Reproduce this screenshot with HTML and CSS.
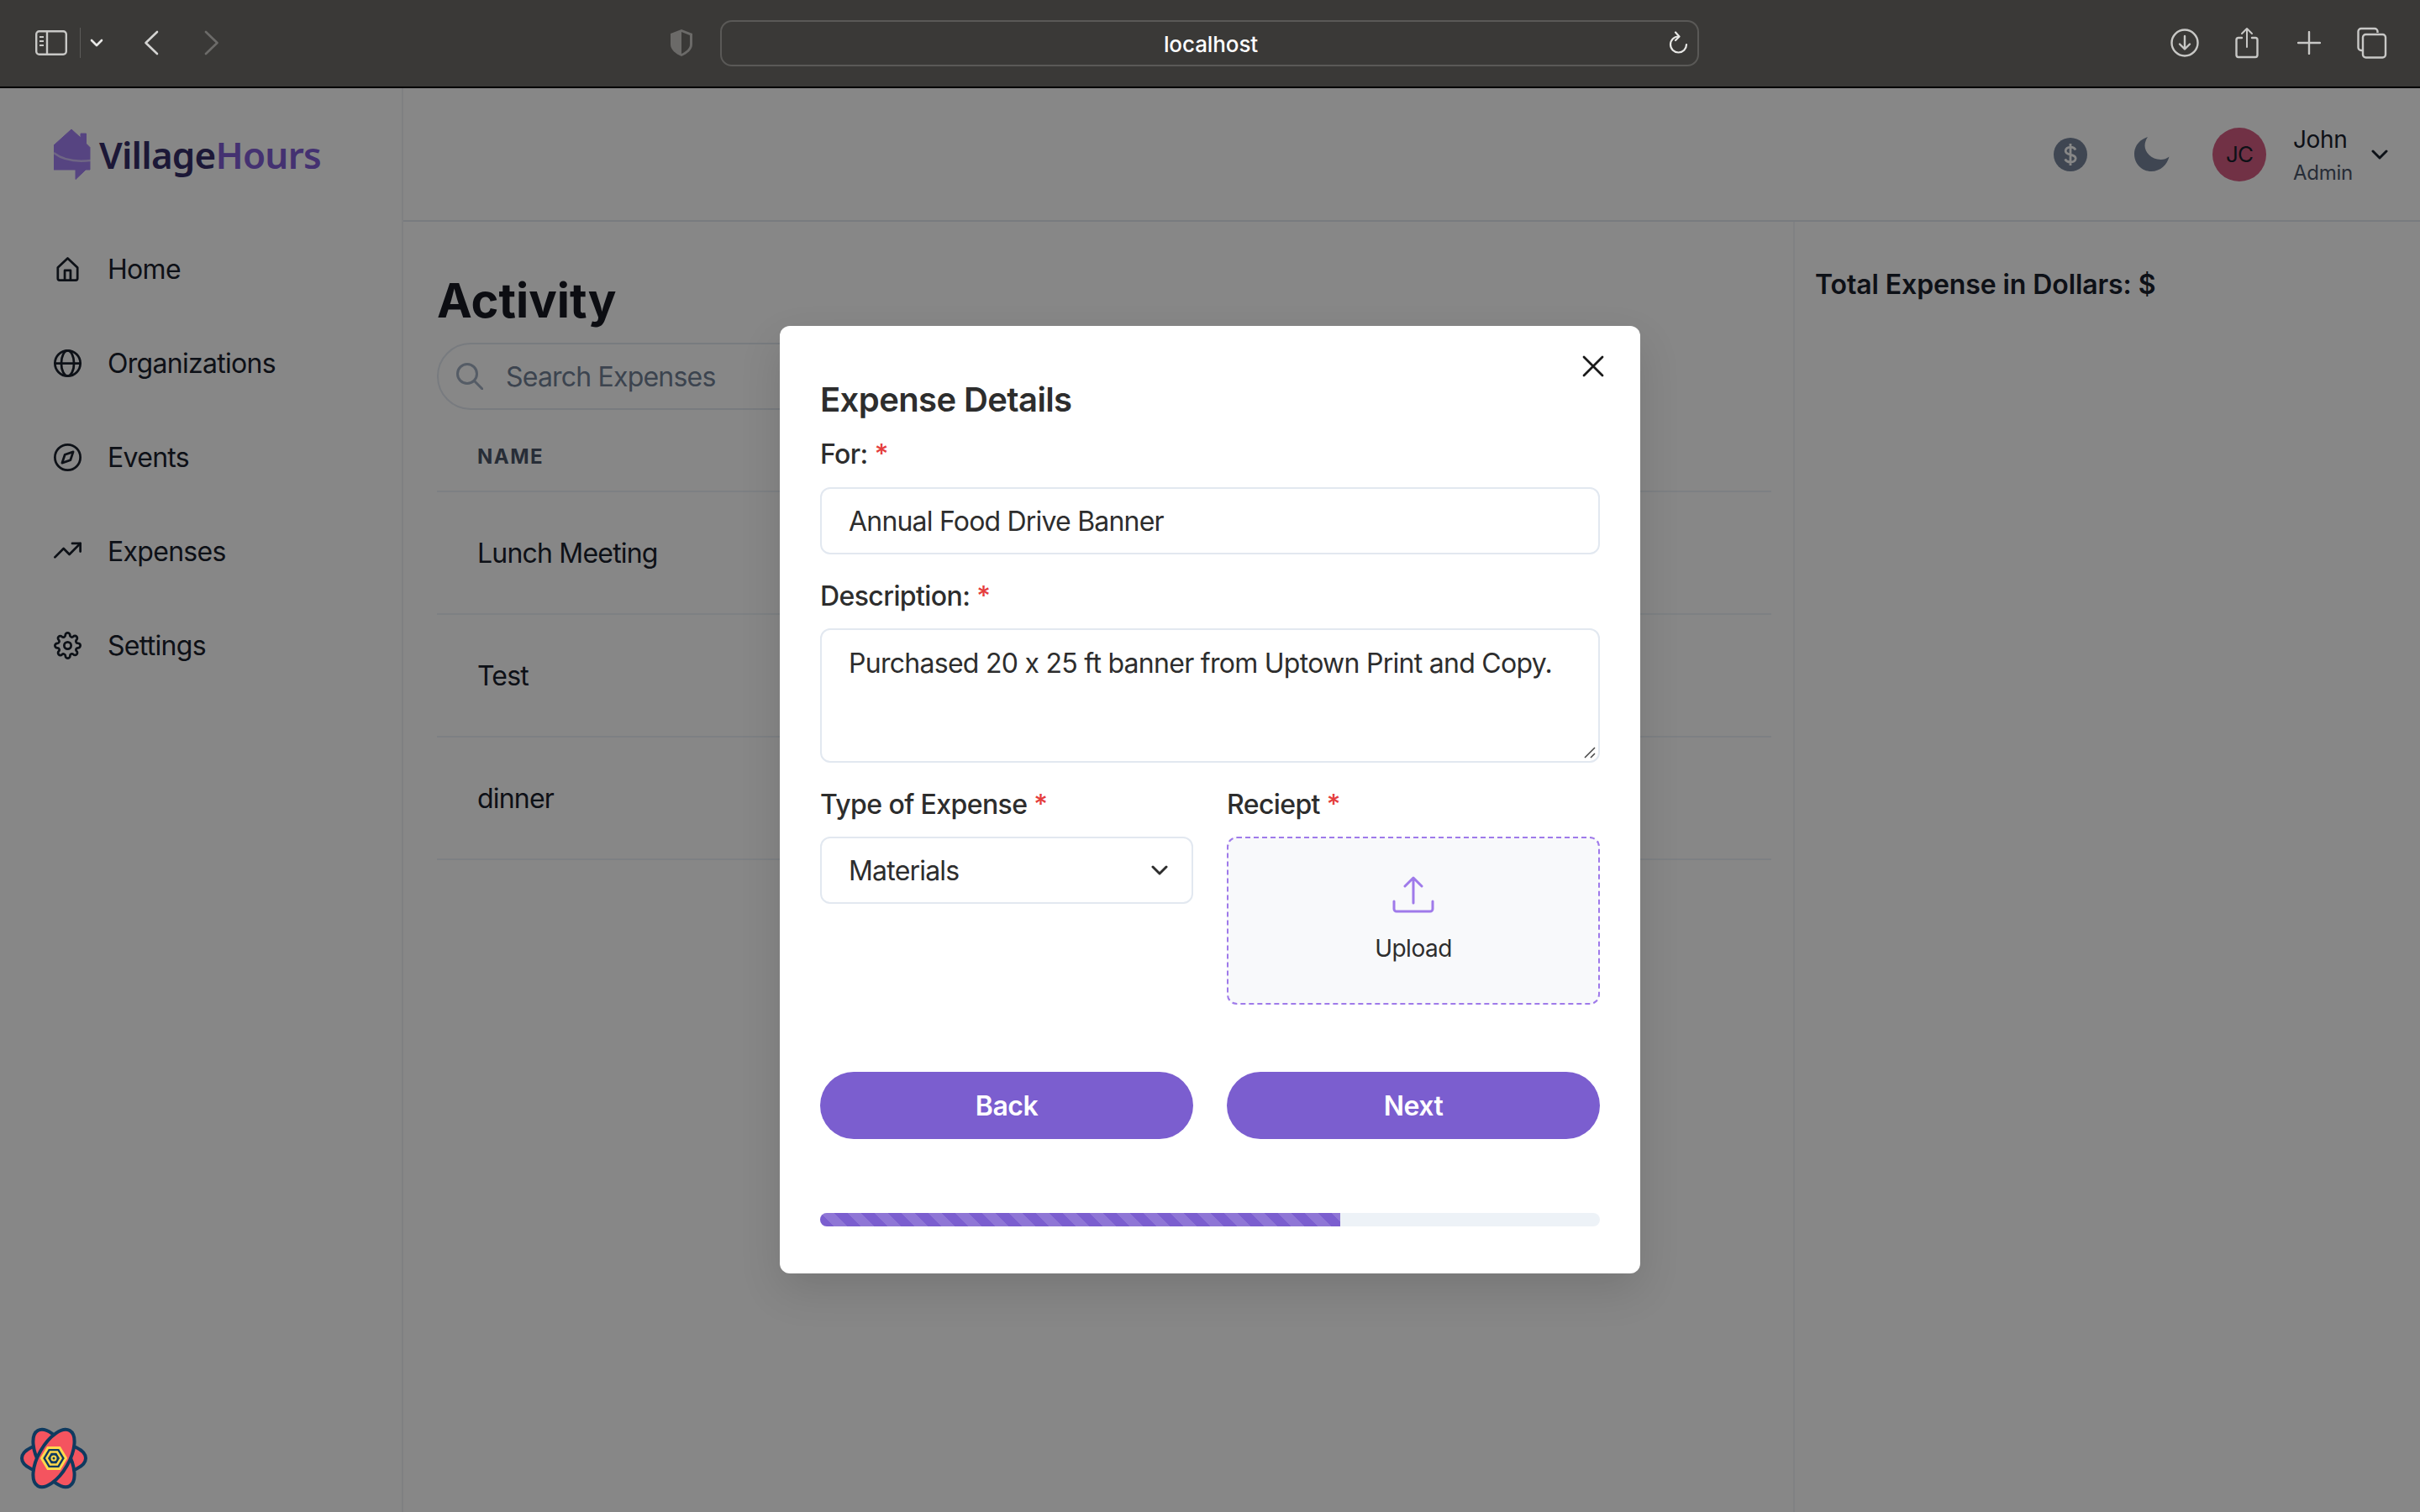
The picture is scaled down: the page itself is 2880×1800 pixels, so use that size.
FILE: index.html
```html
<!DOCTYPE html>
<html lang="en">
<head>
<meta charset="utf-8">
<title>VillageHours</title>
<link rel="stylesheet" href="styles.css">
</head>
<body>
<header class="chrome">
  <div class="chrome-left">
    <svg class="ci-side" width="38" height="30" viewBox="0 0 38 30" fill="none" stroke="#c8c8c6" stroke-width="2.4"><rect x="1.2" y="1.2" width="35.6" height="27.6" rx="3.5"/><path d="M14 1v28"/><path d="M5 8h5M5 13h5M5 18h5" stroke-width="2"/></svg>
    <span class="ci-sep"></span>
    <svg class="ci-drop" width="16" height="10" viewBox="0 0 16 10" fill="none" stroke="#e8e8e6" stroke-width="2.6" stroke-linecap="round" stroke-linejoin="round"><path d="M2 2l6 6 6-6"/></svg>
    <svg class="ci-back" width="18" height="30" viewBox="0 0 18 30" fill="none" stroke="#d4d4d2" stroke-width="2.6" stroke-linecap="round" stroke-linejoin="round"><path d="M16 2L2.5 15 16 28"/></svg>
    <svg class="ci-fwd" width="18" height="30" viewBox="0 0 18 30" fill="none" stroke="#6c6b69" stroke-width="2.6" stroke-linecap="round" stroke-linejoin="round"><path d="M2 2l13.500 13L2 28"/></svg>
  </div>
  <div class="chrome-mid">
    <svg class="ci-shield" width="28" height="34" viewBox="0 0 28 34"><path d="M14 1L27 6v13c0 6-6 11-13 14C7 30 1 25 1 19V6z" fill="#6b6a68"/><path d="M14 4l10 4v11c0 4.500-4.500 8.500-10 11z" fill="#3a3937"/></svg>
    <div class="url">
      <span class="url-text">localhost</span>
      <svg class="ci-reload" width="24" height="28" viewBox="0 0 24 28" fill="none" stroke="#e8e8e6" stroke-width="2.2" stroke-linecap="round" stroke-linejoin="round"><path d="M21 16a9.500 9.500 0 1 1-9.500-9.500"/><path d="M8 1.500l4.500 5-4.500 4.500"/></svg>
    </div>
  </div>
  <div class="chrome-right">
    <svg width="34" height="34" viewBox="0 0 34 34" fill="none" stroke="#c8c8c6" stroke-width="2.4" stroke-linecap="round" stroke-linejoin="round"><circle cx="17" cy="17" r="15.500"/><path d="M17 9v15M11 18.500l6 6 6-6"/></svg>
    <svg width="28" height="38" viewBox="0 0 28 38" fill="none" stroke="#c8c8c6" stroke-width="2.400" stroke-linecap="round" stroke-linejoin="round"><path d="M8 13H4a2.500 2.500 0 0 0-2.500 2.500v18A2.500 2.500 0 0 0 4 36h20a2.500 2.500 0 0 0 2.500-2.500v-18A2.500 2.500 0 0 0 24 13h-4"/><path d="M14 24V2M8 8l6-6 6 6" stroke-width="2"/></svg>
    <svg class="ci-plus" width="28" height="28" viewBox="0 0 28 28" fill="none" stroke="#c8c8c6" stroke-width="2.400" stroke-linecap="round"><path d="M14 1v26M1 14h26"/></svg>
    <svg width="36" height="38" viewBox="0 0 36 38" fill="none" stroke="#c8c8c6" stroke-width="2.400"><path d="M6 28H5a3.500 3.500 0 0 1-3.500-3.500v-19A3.500 3.500 0 0 1 5 2h16a3.500 3.500 0 0 1 3.500 3.500V7"/><rect x="7" y="9" width="27" height="27.500" rx="3.500"/></svg>
  </div>
</header>

<div class="app">
  <aside class="sidebar">
    <div class="logo">
      <svg class="logo-mark" width="44" height="62" viewBox="0 0 44 62"><path d="M21 1L32 11V6h6.500v12L43 22.500V49H38L26 60.500V49H0V20z" fill="#a381f4" stroke="#a381f4" stroke-width="1" stroke-linejoin="round"/><path d="M0 29c10 8 26 11 44 9" fill="none" stroke="#ffffff" stroke-opacity=".5" stroke-width="2.500"/></svg>
      <span class="logo-text"><span class="logo-a">Village</span><span class="logo-b">Hours</span></span>
    </div>
    <nav class="nav">
      <a class="nav-item"><svg class="nav-ico" viewBox="0 0 24 24"><path d="M3.500 10.500L12 2.500l8.500 8V20a1.500 1.500 0 0 1-1.500 1.500H5A1.500 1.500 0 0 1 3.500 20z"/><path d="M9.500 21.500V13h5v8.500"/></svg><span>Home</span></a>
      <a class="nav-item"><svg class="nav-ico" viewBox="0 0 24 24"><circle cx="12" cy="12" r="11"/><path d="M1 12h22"/><ellipse cx="12" cy="12" rx="5.500" ry="11"/></svg><span>Organizations</span></a>
      <a class="nav-item"><svg class="nav-ico" viewBox="0 0 24 24"><circle cx="12" cy="12" r="11"/><polygon points="16.800 7.200 14.400 14.400 7.200 16.800 9.600 9.600"/></svg><span>Events</span></a>
      <a class="nav-item"><svg class="nav-ico" viewBox="0 0 24 24"><path d="M1 17l7.500-7.500 5 5L23 5"/><path d="M16 5h7v7"/></svg><span>Expenses</span></a>
      <a class="nav-item"><svg class="nav-ico" viewBox="0 0 24 24"><circle cx="12" cy="12" r="3"/><path d="M19.400 15a1.650 1.650 0 0 0 .33 1.820l.06.06a2 2 0 0 1 0 2.830 2 2 0 0 1-2.830 0l-.06-.06a1.650 1.650 0 0 0-1.820-.33 1.650 1.650 0 0 0-1 1.510V21a2 2 0 0 1-2 2 2 2 0 0 1-2-2v-.09A1.650 1.650 0 0 0 9 19.400a1.650 1.650 0 0 0-1.820.33l-.06.06a2 2 0 0 1-2.830 0 2 2 0 0 1 0-2.830l.06-.06a1.650 1.650 0 0 0 .33-1.820 1.650 1.650 0 0 0-1.510-1H3a2 2 0 0 1-2-2 2 2 0 0 1 2-2h.09A1.650 1.650 0 0 0 4.600 9a1.650 1.650 0 0 0-.33-1.820l-.06-.06a2 2 0 0 1 0-2.830 2 2 0 0 1 2.830 0l.06.06a1.650 1.650 0 0 0 1.820.33H9a1.650 1.650 0 0 0 1-1.510V3a2 2 0 0 1 2-2 2 2 0 0 1 2 2v.09a1.650 1.650 0 0 0 1 1.510 1.650 1.650 0 0 0 1.820-.33l.06-.06a2 2 0 0 1 2.830 0 2 2 0 0 1 0 2.830l-.06.06a1.650 1.650 0 0 0-.33 1.820V9a1.650 1.650 0 0 0 1.510 1H21a2 2 0 0 1 2 2 2 2 0 0 1-2 2h-.09a1.650 1.650 0 0 0-1.510 1z"/></svg><span>Settings</span></a>
    </nav>
  </aside>

  <div class="content">
    <div class="topbar">
      <svg class="t-dollar" width="40" height="40" viewBox="0 0 40 40"><circle cx="20" cy="20" r="20" fill="#77859c"/><path d="M26 14.500c-1-2.200-3.300-3.300-6-3.300-3.300 0-5.800 1.800-5.800 4.500 0 5.800 12 3 12 8.800 0 2.700-2.700 4.500-6.200 4.500-2.900 0-5.300-1.300-6.300-3.600M20 7v26" fill="none" stroke="#ffffff" stroke-width="2.800"/></svg>
      <svg class="t-moon" width="42" height="42" viewBox="0 0 42 42"><path d="M16 0C8 2.500 0 9 0 20.500 0 32.500 9.500 41 20 41c11.500 0 19-8 21.500-17.500-3 2.500-6.500 3.500-10 3.500C20 27 12.500 18 12.500 10.500 12.500 6.500 14 3 16 0z" fill="#77859c"/></svg>
      <div class="avatar">JC</div>
      <div class="who"><span class="who-name">John</span><span class="who-role">Admin</span></div>
      <svg class="t-chev" width="20" height="12" viewBox="0 0 20 12" fill="none" stroke="#1a202c" stroke-width="3" stroke-linecap="round" stroke-linejoin="round"><path d="M2 2l8 8 8-8"/></svg>
    </div>
    <div class="body-row">
      <main class="main">
        <h1 class="title">Activity</h1>
        <div class="search">
          <svg width="32" height="32" viewBox="0 0 32 32" fill="none" stroke="#a0aec0" stroke-width="3" stroke-linecap="round"><circle cx="13" cy="13" r="11.500"/><path d="M21.500 21.500L31 31"/></svg>
          <span>Search Expenses</span>
        </div>
        <div class="thead">NAME</div>
        <div class="row">Lunch Meeting</div>
        <div class="row">Test</div>
        <div class="row">dinner</div>
      </main>
      <aside class="summary">Total Expense in Dollars: $</aside>
    </div>
  </div>
</div>

<div class="overlay">
  <section class="modal">
    <svg class="close" width="26" height="26" viewBox="0 0 26 26" fill="none" stroke="#1a1a1a" stroke-width="2.800" stroke-linecap="round"><path d="M2 2l22 22M24 2L2 24"/></svg>
    <h2 class="modal-title">Expense Details</h2>
    <div class="lbl lbl-for">For: <em>*</em></div>
    <div class="field field-for">Annual Food Drive Banner</div>
    <div class="lbl lbl-desc">Description: <em>*</em></div>
    <div class="field field-area">Purchased 20 x 25 ft banner from Uptown Print and Copy.
      <svg class="grip" width="16" height="16" viewBox="0 0 16 16" fill="none" stroke="#444" stroke-width="1.500"><path d="M14 2L2 14M14 9l-5 5"/></svg>
    </div>
    <div class="cols">
      <div class="col">
        <div class="lbl">Type of Expense <em>*</em></div>
        <div class="field field-select">Materials
          <svg width="20" height="12" viewBox="0 0 20 12" fill="none" stroke="#2d2d2d" stroke-width="3" stroke-linecap="round" stroke-linejoin="round"><path d="M2 2l8 8 8-8"/></svg>
        </div>
      </div>
      <div class="col">
        <div class="lbl">Reciept <em>*</em></div>
        <div class="drop">
          <svg width="50" height="44" viewBox="0 0 50 44" fill="none" stroke="#9f7aea" stroke-width="3" stroke-linecap="round" stroke-linejoin="round"><path d="M25 32V2M15 12L25 2l10 10"/><path d="M2 30v9a3 3 0 0 0 3 3h40a3 3 0 0 0 3-3v-9"/></svg>
          <span>Upload</span>
        </div>
      </div>
    </div>
    <div class="cols btns">
      <button class="btn">Back</button>
      <button class="btn">Next</button>
    </div>
    <div class="progress"><div class="bar" style="width:66.67%"></div></div>
  </section>
</div>

<svg class="devtools" width="80" height="74" viewBox="0 0 80 74">
  <g fill="#f4545f" stroke="#0f3a5f" stroke-width="4">
    <ellipse cx="40" cy="37" rx="38" ry="18"/>
    <ellipse cx="40" cy="37" rx="38" ry="18" transform="rotate(60 40 37)"/>
    <ellipse cx="40" cy="37" rx="38" ry="18" transform="rotate(120 40 37)"/>
  </g>
  <path d="M33 24.500h14l7.500 12.500-7.500 12.500H33L25.500 37z" fill="#0f3a5f" stroke="#ffd94c" stroke-width="3"/>
  <path d="M36 29.500h8l4.500 7.500-4.500 7.500h-8L31.500 37z" fill="#0f3a5f" stroke="#ffd94c" stroke-width="2.500"/>
  <circle cx="40" cy="37" r="2.500" fill="none" stroke="#ffd94c" stroke-width="2"/>
</svg>
</body>
</html>
```
FILE: styles.css
```css
* { box-sizing: border-box; }
html, body { margin: 0; padding: 0; }
body {
  width: 2880px;
  height: 1800px;
  overflow: hidden;
  position: relative;
  background: #fff;
  color: #1a202c;
  font-family: Inter, "Liberation Sans", sans-serif;
  font-size: 32px;
  font-feature-settings: "calt" 0;
  letter-spacing: -.8px;
}
.chrome {
  height: 105px;
  background: #3a3937;
  border-bottom: 2px solid #000;
  display: flex;
  align-items: center;
  flex: none;
  padding-bottom: 1px;
}
.chrome svg { display: block; flex: none; }
.chrome-left { display: flex; align-items: center; padding-left: 42px; width: 797px; }
.ci-sep { width: 1px; height: 36px; background: #5c5b59; margin-left: 15px; }
.ci-drop { margin-left: 11px; }
.ci-back { margin-left: 48px; }
.ci-fwd { margin-left: 54px; }
.chrome-mid { display: flex; align-items: center; }
.url {
  margin-left: 32px;
  width: 1165px;
  height: 55px;
  border: 2px solid #5a5957;
  border-radius: 14px;
  display: flex;
  align-items: center;
  justify-content: center;
  position: relative;
}
.url-text { color: #fff; font-size: 26px; font-weight: 500; letter-spacing: -.1px; padding: 2px 0 0 3px; }
.ci-reload { position: absolute; right: 10px; top: 11px; }
.chrome-right { display: flex; align-items: center; gap: 43px; margin-left: 561px; }
.chrome-right .ci-plus { margin-left: 3px; }

.app { display: flex; height: 1695px; }
.sidebar { width: 480px; flex: none; border-right: 2px solid #f0f1f5; padding-left: 64px; }
.logo { display: flex; align-items: center; gap: 10px; height: 62px; margin-top: 48px; }
.logo-mark { flex: none; }
.logo-text { font-family: "Noto Sans", sans-serif; font-weight: 600; font-size: 44px; letter-spacing: -.8px; }
.logo-a { color: #362e68; }
.logo-b { color: #815ed5; }
.nav { display: flex; flex-direction: column; margin-top: 49px; }
.nav-item { height: 112px; display: flex; align-items: center; gap: 31px; color: #1a202c; letter-spacing: -.7px; }
.nav-ico { width: 33px; height: 33px; flex: none; fill: none; stroke: currentColor; stroke-width: 2; stroke-linecap: round; stroke-linejoin: round; }

.content { flex: 1; min-width: 0; display: flex; flex-direction: column; }
.topbar {
  height: 159px;
  border-bottom: 2px solid #e2e8f0;
  display: flex;
  align-items: center;
  padding-left: 1964px;
  flex: none;
}
.t-dollar { flex: none; }
.t-moon { margin-left: 56px; flex: none; }
.avatar {
  width: 64px; height: 64px; border-radius: 50%;
  background: #d55e83;
  display: flex; align-items: center; justify-content: center;
  font-size: 26px; margin-left: 51px; color: #1a202c; flex: none;
}
.who { display: flex; flex-direction: column; margin-left: 32px; gap: 6px; padding-top: 2px; }
.who-name { font-size: 28px; line-height: 36px; letter-spacing: -.4px; }
.who-role { font-size: 24px; line-height: 32px; color: #4a5568; letter-spacing: -.3px; }
.t-chev { margin-left: 22px; flex: none; }
.body-row { flex: 1; display: flex; min-height: 0; }
.main { width: 1656px; flex: none; padding: 58px 26px 0 40px; border-right: 2px solid #f2f4f7; }
.title { margin: 0; font-size: 56px; line-height: 72px; font-weight: 700; color: #171923; letter-spacing: 0; }
.search {
  margin-top: 14px;
  width: 800px; height: 80px;
  border: 2px solid #e2e8f0;
  border-radius: 40px;
  display: flex; align-items: center; gap: 27px;
  padding-left: 21px;
  color: #718096;
}
.thead {
  height: 98px;
  border-bottom: 2px solid #edf2f7;
  padding: 42px 0 0 48px;
  font-size: 24px; line-height: 28px; font-weight: 700; letter-spacing: 1.500px;
  color: #4a5568;
}
.row {
  height: 146px;
  border-bottom: 2px solid #edf2f7;
  padding-left: 48px;
  display: flex; align-items: center;
  color: #1a202c;
}
.summary { padding: 53px 0 0 24px; font-weight: 600; font-size: 32px; line-height: 44px; color: #1a202c; letter-spacing: -.1px; }

.overlay {
  position: absolute; left: 0; right: 0; top: 104px; bottom: 0;
  background: rgba(0,0,0,.47);
  display: flex; align-items: center; justify-content: center;
}
.devtools { position: absolute; left: 24px; top: 1699px; }
.modal {
  width: 1024px; height: 1128px;
  background: #fff;
  border-radius: 12px;
  box-shadow: 0 20px 50px rgba(0,0,0,.12);
  padding: 60px 48px 0;
  position: relative;
  color: #2d2d2d;
}
.close { position: absolute; right: 43px; top: 35px; }
.modal-title { margin: 0; font-size: 40px; line-height: 56px; font-weight: 600; color: #2d2d2d; letter-spacing: -.6px; }
.lbl { font-size: 32px; line-height: 48px; font-weight: 500; white-space: nowrap; letter-spacing: -.6px; }
.lbl em { color: #e53e3e; font-style: normal; }
.lbl-for { margin-top: 13px; }
.lbl-desc { margin-top: 26px; }
.field {
  border: 2px solid #e2e8f0;
  border-radius: 12px;
  background: #fff;
  padding-left: 32px;
  font-size: 32px;
  color: #2d2d2d;
  position: relative;
}
.field-for { height: 80px; margin-top: 15px; display: flex; align-items: center; }
.field-area { height: 160px; margin-top: 14px; padding-top: 21px; line-height: 38px; letter-spacing: -.72px; }
.grip { position: absolute; right: 2px; bottom: 2px; }
.cols { display: grid; grid-template-columns: 444px 444px; column-gap: 40px; }
.cols:not(.btns) { margin-top: 26px; }
.col .lbl { margin-bottom: 14px; }
.field-select { height: 80px; display: flex; align-items: center; justify-content: space-between; padding-right: 28px; }
.drop {
  height: 200px;
  border: 2px dashed #9f7aea;
  border-radius: 12px;
  background: #f8f9fb;
  display: flex; flex-direction: column; align-items: center;
  padding-top: 45px;
  font-size: 28px;
  letter-spacing: -.5px;
  gap: 25px;
}
.btns { margin-top: 80px; }
.btn {
  height: 80px;
  border: 0;
  border-radius: 40px;
  background: #7b5ecf;
  color: #fff;
  font: 600 32px Inter, sans-serif;
  letter-spacing: -.5px;
}
.progress { margin-top: 88px; height: 16px; border-radius: 8px; background: #edf2f7; overflow: hidden; }
.bar {
  height: 100%;
  background-color: #7b5ecf;
  background-image: linear-gradient(45deg, rgba(255,255,255,.15) 25%, transparent 25%, transparent 50%, rgba(255,255,255,.15) 50%, rgba(255,255,255,.15) 75%, transparent 75%);
  background-size: 32px 32px;
}
```
